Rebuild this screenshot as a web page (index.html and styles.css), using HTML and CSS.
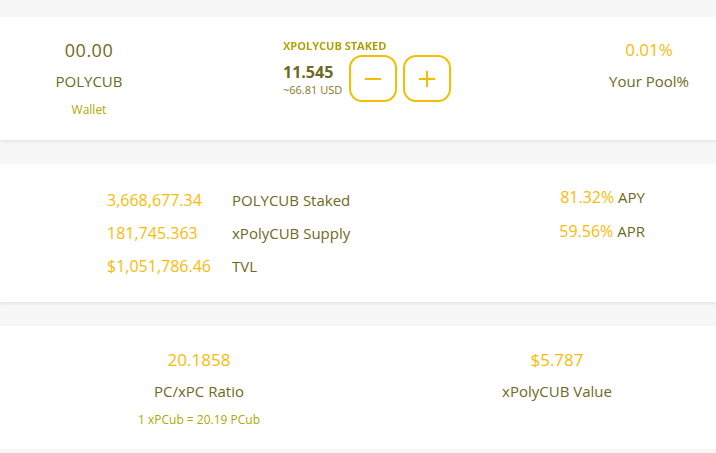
FILE: index.html
```html
<!DOCTYPE html>
<html>
<head>
<meta charset="utf-8">
<link rel="stylesheet" href="styles.css">
</head>
<body>
<div class="page">
  <section class="card card-top">
    <div class="col col-wallet">
      <div class="big olive wide">00.00</div>
      <div class="label">POLYCUB</div>
      <div class="small lime">Wallet</div>
    </div>
    <div class="staked">
      <div class="staked-title">XPOLYCUB STAKED</div>
      <div class="staked-row">
        <div class="staked-values">
          <div class="staked-amount">11.545</div>
          <div class="staked-usd">~66.81 USD</div>
        </div>
        <button class="btn" aria-label="minus">
          <svg width="18" height="18" viewBox="0 0 18 18"><path d="M1 9h16" stroke="#f6bc00" stroke-width="2" fill="none"/></svg>
        </button>
        <button class="btn" aria-label="plus">
          <svg width="18" height="18" viewBox="0 0 18 18"><path d="M1 9h16M9 1v16" stroke="#f6bc00" stroke-width="2" fill="none"/></svg>
        </button>
      </div>
    </div>
    <div class="col col-pool">
      <div class="big yellow">0.01%</div>
      <div class="label">Your Pool%</div>
    </div>
  </section>

  <section class="card card-stats">
    <div class="stats-list">
      <div class="stat-row"><span class="val yellow">3,668,677.34</span><span class="olive">POLYCUB Staked</span></div>
      <div class="stat-row"><span class="val yellow">181,745.363</span><span class="olive">xPolyCUB Supply</span></div>
      <div class="stat-row"><span class="val yellow">$1,051,786.46</span><span class="olive">TVL</span></div>
    </div>
    <div class="rates">
      <div class="rate-row"><span class="num yellow">81.32%</span> <span class="olive">APY</span></div>
      <div class="rate-row"><span class="num yellow">59.56%</span> <span class="olive">APR</span></div>
    </div>
  </section>

  <section class="card card-bottom">
    <div class="col">
      <div class="big yellow">20.1858</div>
      <div class="label">PC/xPC Ratio</div>
      <div class="small lime">1 xPCub = 20.19 PCub</div>
    </div>
    <div class="col">
      <div class="big yellow">$5.787</div>
      <div class="label">xPolyCUB Value</div>
    </div>
  </section>
</div>
</body>
</html>
```

FILE: styles.css
```css
html, body {
  margin: 0;
  padding: 0;
  background: #f7f7f7;
  font-family: "Open Sans", "Noto Sans", sans-serif;
}

.page {
  display: flex;
  flex-direction: column;
  gap: 24px;
  padding-top: 17px;
}

.card {
  background: #ffffff;
  box-shadow: 0 2px 3px rgba(0, 0, 0, 0.07);
}

.olive { color: #6f6a22; }
.yellow { color: #fabb08; }
.lime { color: #b5a700; }

.col {
  display: flex;
  flex-direction: column;
  align-items: center;
}

.big {
  font-size: 17px;
  line-height: 22px;
}

.big.wide {
  font-size: 18px;
  letter-spacing: 0.5px;
}

.label {
  font-size: 15px;
  font-weight: 500;
  line-height: 20px;
  color: #6f6a22;
  margin-top: 10px;
}

.small {
  font-size: 12px;
  line-height: 16px;
  margin-top: 11px;
}

/* top card */
.card-top {
  height: 123px;
  display: grid;
  grid-template-columns: 178px 1fr 96px;
  padding-right: 19px;
  box-sizing: border-box;
  padding-top: 22px;
}

.staked {
  margin-left: 105px;
  margin-top: 0;
}

.staked-title {
  font-size: 11px;
  font-weight: 700;
  line-height: 14px;
  color: #a39a0a;
  background: linear-gradient(90deg, #b0a600, #a17f12);
  -webkit-background-clip: text;
  background-clip: text;
  -webkit-text-fill-color: transparent;
}

.staked-row {
  display: flex;
  align-items: center;
  margin-top: 2px;
}

.staked-values {
  width: 66px;
  flex-shrink: 0;
}

.staked-amount {
  font-size: 16px;
  font-weight: 700;
  color: #6f6a22;
  line-height: 22px;
}

.staked-usd {
  font-size: 11px;
  color: #8c7524;
  line-height: 14px;
}

.btn {
  width: 48px;
  height: 47px;
  flex-shrink: 0;
  border: 2px solid #f6bc00;
  border-radius: 13px;
  background: #ffffff;
  display: flex;
  align-items: center;
  justify-content: center;
  padding: 0;
  margin-right: 6px;
}

/* stats card */
.card-stats {
  height: 138px;
  box-sizing: border-box;
  display: flex;
  justify-content: space-between;
  padding: 25px 71px 0 107px;
}

.stats-list {
  display: flex;
  flex-direction: column;
  gap: 11px;
}

.stat-row {
  display: flex;
  font-size: 15px;
  font-weight: 500;
  line-height: 22px;
}

.val {
  width: 125px;
  font-size: 16px;
  font-weight: 400;
}

.rates {
  display: flex;
  flex-direction: column;
  align-items: flex-end;
  gap: 12px;
  margin-top: -3px;
}

.rate-row {
  font-size: 15px;
  font-weight: 500;
  line-height: 22px;
}

.num {
  font-size: 16px;
  font-weight: 400;
}

/* bottom card */
.card-bottom {
  height: 123px;
  box-sizing: border-box;
  display: grid;
  grid-template-columns: 398px 1fr;
  padding-top: 23px;
}

.card-bottom .label {
  margin-top: 10px;
}
```
